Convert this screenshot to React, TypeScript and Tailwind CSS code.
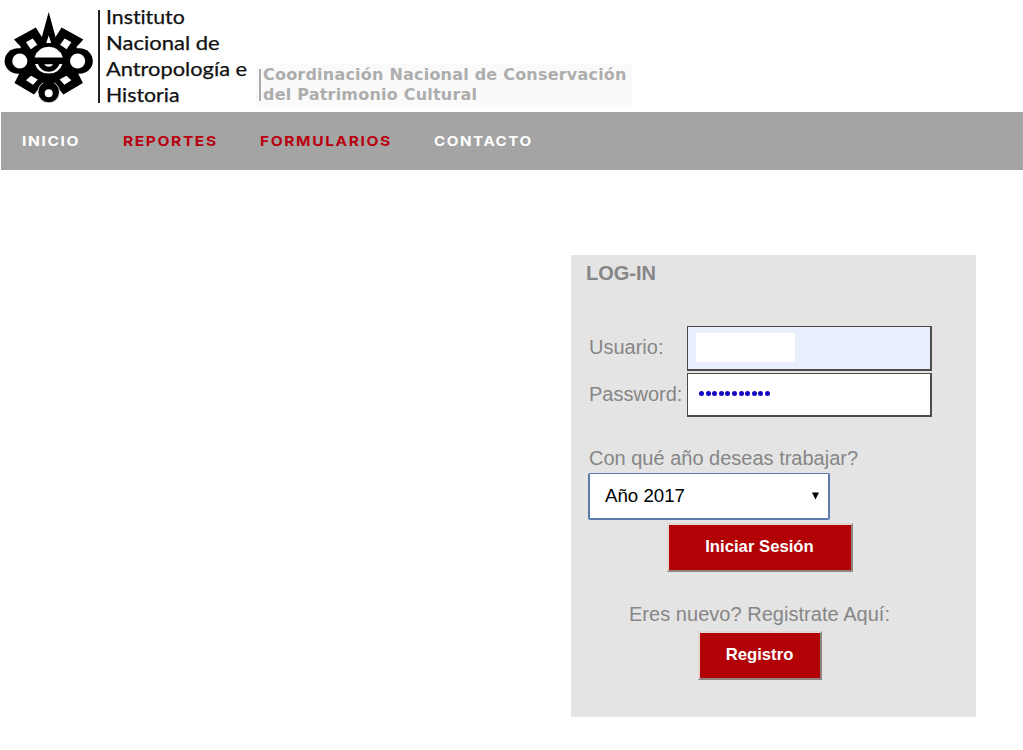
import React from "react";

function Emblem() {
  return (
    <svg width="92" height="94" viewBox="3 10 92 94" className="block" fill="#000">
      <path d="M48.7 12 L55.8 38 L58 48 H39.5 L41.6 38 Z" />
      <path d="M14 39.5 L35.8 27.5 L42.5 38 L48 46 L26 58 L19 50 L21 47 Z" />
      <path d="M83.4 39.5 L61.6 27.5 L54.9 38 L49.4 46 L71.4 58 L78.4 50 L76.4 47 Z" />
      <path d="M14.5 83 L34 94.5 L46 80 L42 72 L24 64 L20 72 Z" />
      <path d="M82.9 83 L63.4 94.5 L51.4 80 L55.4 72 L73.4 64 L77.4 72 Z" />
      <ellipse cx="18" cy="61" rx="13.4" ry="12.8" />
      <ellipse cx="79.4" cy="61" rx="13.4" ry="12.8" />
      <circle cx="48.7" cy="62" r="20.3" />
      <circle cx="48.7" cy="92" r="10.8" stroke="#fff" strokeWidth="0.8" />
      <path d="M43 83.5 H54.4 L53 78 H44.4 Z" />
      <g fill="#fff">
        <path d="M48.7 35.5 L51.2 43 H46.2 Z" />
        <path d="M26 42.3 L32.7 38.5 L37.3 44.8 L30.8 49.2 Z" />
        <path d="M71.4 42.3 L64.7 38.5 L60.1 44.8 L66.6 49.2 Z" />
        <path d="M26 80.3 L31 75.8 L37.8 79.4 L33 84.8 Z" />
        <path d="M71.4 80.3 L66.4 75.8 L59.6 79.4 L64.4 84.8 Z" />
        <circle cx="19.8" cy="61" r="7.6" />
        <circle cx="77.6" cy="61" r="7.6" />
        <path d="M34.5 57.5 Q38 46.8 48.7 46.8 Q59.4 46.8 62.9 57.5 Z" />
        <circle cx="48.7" cy="93.2" r="4" />
      </g>
      <path d="M35 64 Q38 73.5 48.7 73.5 Q59.4 73.5 62.4 64 Z" fill="#fff" />
      <path d="M37.3 63 Q41 71.7 48.7 71.7 Q56.4 71.7 60.1 63 Z" />
      <path d="M44.2 64.3 H53.2 Q51.5 66.8 48.7 66.8 Q45.9 66.8 44.2 64.3 Z" fill="#fff" />
    </svg>
  );
}

export default function App() {
  return (
    <div className="h-[750px] w-[1023px] overflow-hidden bg-white font-['Liberation_Sans',sans-serif]">
      <header className="flex h-28 items-start">
        <div className="flex pt-[10px] pl-[3px]">
          <Emblem />
          <div className="mr-[0.5px] ml-[2.5px] h-[93px] w-[2px] bg-[#222]" />
          <div className="-mt-[6px] ml-[6px] w-[150px] font-[Lato,sans-serif] text-[18.5px] leading-[26px] whitespace-nowrap text-[#111] [font-variant-ligatures:none] [-webkit-text-stroke:0.25px_#111]">
            <div className="origin-left scale-x-[1.15]">Instituto</div>
            <div className="origin-left scale-x-[1.19]">Nacional de</div>
            <div className="origin-left scale-x-[1.18]">Antropología e</div>
            <div className="origin-left scale-x-[1.15]">Historia</div>
          </div>
        </div>
        <div className="mt-16 flex h-[43px] w-[376px] bg-[#fafafa] pl-[3px]">
          <div className="mt-[5px] h-[32px] w-[2px] bg-[#aaa]" />
          <div className="ml-[2px] pt-px font-['DejaVu_Sans',sans-serif] text-[16px] leading-5 font-bold tracking-[0.21px] whitespace-nowrap text-[#adadad]">
            <div>Coordinación Nacional de Conservación</div>
            <div>del Patrimonio Cultural</div>
          </div>
        </div>
      </header>
      <nav className="ml-px flex h-[58px] items-center bg-[#a4a4a4] pl-[21px] font-[Inter,sans-serif] text-[13.5px] font-bold whitespace-nowrap text-white">
        <a className="w-[101px] tracking-[1.4px]"><span className="inline-block origin-left scale-x-[1.15]">INICIO</span></a>
        <a className="w-[137px] tracking-[1.4px] text-[#b9000f]"><span className="inline-block origin-left scale-x-[1.15]">REPORTES</span></a>
        <a className="w-[174px] tracking-[1.4px] text-[#b9000f]"><span className="inline-block origin-left scale-x-[1.15]">FORMULARIOS</span></a>
        <a className="tracking-[1.4px]"><span className="inline-block origin-left scale-x-[1.12]">CONTACTO</span></a>
      </nav>
      <main className="mt-[85px] ml-[571px] h-[462px] w-[405px] bg-[#e4e4e4] pt-[7px] text-[20px] text-[#868686]">
        <h1 className="ml-[15px] text-[20px] leading-[22px] font-bold">LOG-IN</h1>
        <div className="mt-[42px] ml-[18px] flex h-[45px] items-center">
          <label className="w-[98px] pb-[4px]">Usuario:</label>
          <div className="h-[45px] w-[245px] border border-r-2 border-b-2 border-[#4b4b4b] bg-[#e8eefb] pt-[6px] pl-2">
            <div className="h-[29px] w-[99px] bg-white" />
          </div>
        </div>
        <div className="mt-[2px] ml-[18px] flex h-[45px] items-center">
          <label className="w-[98px] pb-[4px]">Password:</label>
          <div className="mb-px flex h-[44px] w-[245px] items-center gap-[1.6px] border border-r-2 border-b-2 border-[#4b4b4b] bg-white pb-[2px] pl-[11px]">
            {Array.from({ length: 11 }, (_, i) => (
              <span key={i} className="size-[5px] rounded-full bg-[#1208c4]" />
            ))}
          </div>
        </div>
        <div className="mt-[29px] ml-[18px] leading-[22px]">Con qué año deseas trabajar?</div>
        <div className="mt-[4px] ml-[17px] flex h-[47px] w-[242px] items-center justify-between rounded-[2px] border-2 border-t-[1.5px] border-[#5c7cae] bg-white pr-[9px] pl-[15px] text-[18.7px] text-black">
          <span>Año 2017</span>
          <svg width="7" height="8" viewBox="0 0 7 8"><path d="M0 .5H7L3.5 7.5Z" /></svg>
        </div>
        <button className="mt-[3px] ml-[96px] flex h-[49px] w-[186px] items-center justify-center border-2 border-t-[#e6d6d2] border-r-[#8f8480] border-b-[#8f8480] border-l-[#e6d6d2] bg-[#b20205] pr-px pb-[2px] text-[16.7px] font-bold text-white">
          Iniciar Sesión
        </button>
        <div className="mt-[31px] ml-[58px] leading-[22px] tracking-[0.03px]">Eres nuevo? Registrate Aquí:</div>
        <button className="mt-[6px] ml-[127px] flex h-[49px] w-[124px] items-center justify-center border-2 border-t-[#e6d6d2] border-r-[#8f8480] border-b-[#8f8480] border-l-[#e6d6d2] bg-[#b20205] pr-px pb-[2px] text-[16.7px] font-bold text-white">
          Registro
        </button>
      </main>
    </div>
  );
}
